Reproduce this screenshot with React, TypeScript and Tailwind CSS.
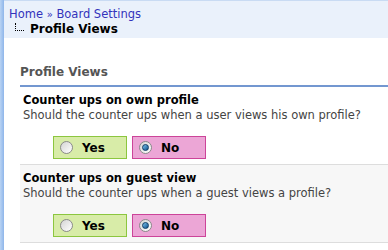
const font = { fontFamily: '"DejaVu Sans", Verdana, sans-serif' };

function Radio({ checked }: { checked?: boolean }) {
  return (
    <span className="relative inline-block w-[13px] h-[13px] rounded-full border border-[#8a8a8a] bg-gradient-to-br from-[#d4d4d4] to-[#ffffff]">
      {checked && (
        <span className="absolute left-[2px] top-[2px] w-[7px] h-[7px] rounded-full bg-gradient-to-br from-[#7cc4ee] to-[#0a4f8a] border border-[#0b3c66]" />
      )}
    </span>
  );
}

function YesNo() {
  return (
    <div className="flex gap-[5px] pl-[30px] mt-[13px] pb-[5px]">
      <label className="flex items-center gap-[9px] w-[74px] h-[23px] pl-[6px] bg-[#d8eca8] border border-[#8cc63f] text-[12px] font-bold text-black">
        <Radio />
        Yes
      </label>
      <label className="flex items-center gap-[9px] w-[74px] h-[23px] pl-[6px] bg-[#eca6d6] border border-[#cc4499] text-[12px] font-bold text-black">
        <Radio checked />
        No
      </label>
    </div>
  );
}

function Setting({ title, desc, shaded }: { title: string; desc: string; shaded?: boolean }) {
  return (
    <div className={`border-b border-[#dddddd] pt-[6px] pl-[3px] ${shaded ? 'bg-[#f7f7f7]' : 'bg-white'}`}>
      <div className="text-[11.5px] font-bold text-black leading-[15px]">{title}</div>
      <div className="text-[11.5px] text-[#444444] leading-[15px] whitespace-nowrap">{desc}</div>
      <YesNo />
    </div>
  );
}

export default function App() {
  return (
    <div className="w-[388px] h-[250px] flex bg-white overflow-hidden" style={font}>
      <div className="w-[4px] bg-gradient-to-r from-[#b9d3f3] to-[#8fb6ea]" />
      <div className="flex-1">
        <div className="h-[38px] bg-[#eaf1fb] border-t border-[#c9dbf3] pl-[5px] pt-[6px]">
          <div className="text-[11.5px] leading-[14px] text-[#3333bb]">
            Home <span className="text-[10px]">»</span> Board Settings
          </div>
          <div className="flex items-start">
            <div className="ml-[6px] mt-[1px] w-[9px] h-[8px] border-l border-b border-dotted border-black" />
            <div className="ml-[6px] text-[12px] leading-[15px] font-bold text-black">Profile Views</div>
          </div>
        </div>
        <div className="pl-[16px] pt-[27px]">
          <div className="text-[12px] leading-[15px] font-bold text-[#555555] pb-[5px] border-b-2 border-[#7397d0]">
            Profile Views
          </div>
          <Setting title="Counter ups on own profile" desc="Should the counter ups when a user views his own profile?" />
          <Setting shaded title="Counter ups on guest view" desc="Should the counter ups when a guest views a profile?" />
        </div>
      </div>
    </div>
  );
}
